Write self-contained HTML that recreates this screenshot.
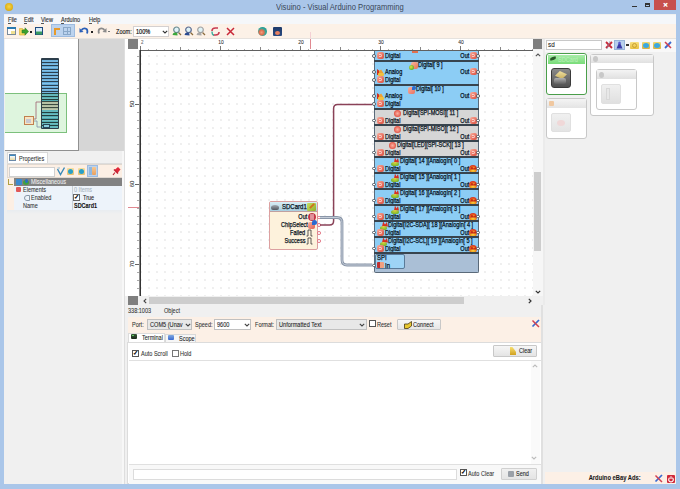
<!DOCTYPE html>
<html><head><meta charset="utf-8">
<style>
*{margin:0;padding:0;box-sizing:border-box}
html,body{width:680px;height:489px;overflow:hidden;background:#aac5e8;font-family:"Liberation Sans",sans-serif;color:#222;position:relative}
.a{position:absolute}
.t{position:absolute;white-space:nowrap;-webkit-text-stroke:0.08px currentColor}
.b .t,.t.k{-webkit-text-stroke:0.25px currentColor}
</style></head><body>
<div class="a" style="left:0px;top:0px;width:680px;height:489px;background:#aac6e9;"></div>
<div class="a" style="left:5px;top:3px;width:8px;height:8px;background:radial-gradient(circle at 50% 45%,#f6d64a 0,#e0b21a 60%,#c89a10 100%);border-radius:50%"></div>
<div class="t" style="left:276px;top:2.21px;font-size:9.5px;line-height:10.86px;color:#3a4658;font-weight:400;transform:scaleX(0.8);transform-origin:0 0;-webkit-text-stroke:0">Visuino - Visual Arduino Programming</div>
<div class="a" style="left:632px;top:6px;width:5px;height:1px;background:#333;"></div>
<div class="a" style="left:645px;top:3px;width:5px;height:4px;background:none;border:1px solid #333;border-top-width:2px"></div>
<div class="a" style="left:654px;top:0px;width:22px;height:10px;background:#c7504d;"></div>
<div class="t" style="left:465px;width:400px;text-align:center;top:1.66px;font-size:6px;line-height:6.86px;color:#fff;font-weight:700;transform:scaleX(1);transform-origin:50% 0;">&#x2715;</div>
<div class="a" style="left:4px;top:14px;width:672px;height:470px;background:#f0f0f0;"></div>
<div class="a" style="left:4px;top:15px;width:672px;height:9px;background:#f5f7fa;"></div>
<div class="t" style="left:8px;top:16.10px;font-size:7px;line-height:8.00px;color:#333;font-weight:400;transform:scaleX(0.79);transform-origin:0 0;-webkit-text-stroke:0.15px currentColor">File</div>
<div class="a" style="left:8px;top:23px;width:3px;height:0.6px;background:#555;"></div>
<div class="t" style="left:24px;top:16.10px;font-size:7px;line-height:8.00px;color:#333;font-weight:400;transform:scaleX(0.79);transform-origin:0 0;-webkit-text-stroke:0.15px currentColor">Edit</div>
<div class="a" style="left:24px;top:23px;width:3px;height:0.6px;background:#555;"></div>
<div class="t" style="left:41px;top:16.10px;font-size:7px;line-height:8.00px;color:#333;font-weight:400;transform:scaleX(0.79);transform-origin:0 0;-webkit-text-stroke:0.15px currentColor">View</div>
<div class="a" style="left:41px;top:23px;width:3px;height:0.6px;background:#555;"></div>
<div class="t" style="left:61px;top:16.10px;font-size:7px;line-height:8.00px;color:#333;font-weight:400;transform:scaleX(0.79);transform-origin:0 0;-webkit-text-stroke:0.15px currentColor">Arduino</div>
<div class="a" style="left:61px;top:23px;width:3px;height:0.6px;background:#555;"></div>
<div class="t" style="left:89px;top:16.10px;font-size:7px;line-height:8.00px;color:#333;font-weight:400;transform:scaleX(0.79);transform-origin:0 0;-webkit-text-stroke:0.15px currentColor">Help</div>
<div class="a" style="left:89px;top:23px;width:3px;height:0.6px;background:#555;"></div>
<div class="a" style="left:4px;top:24px;width:672px;height:14px;background:#fcf1e7;"></div>
<div class="a" style="left:4px;top:38px;width:672px;height:1px;background:#e6e2de;"></div>
<svg class="a" style="left:7px;top:27px" width="9" height="8"><rect x="0.5" y="0.5" width="8" height="7" fill="#fff" stroke="#7a8a9a" stroke-width="1"/><rect x="0" y="0" width="9" height="2" fill="#2a7ab0"/><rect x="4" y="4" width="4" height="3" fill="#f0e090"/></svg>
<svg class="a" style="left:19px;top:27px" width="10" height="9"><path d="M0.5 1.5 H3.5 L4.5 2.5 H6 V8 H0.5 Z" fill="#f2d860" stroke="#d8b030" stroke-width="0.6"/><path d="M3 3 H6 V0.8 L9.6 4.5 L6 8.2 V6 H3 Z" fill="#3aa030" stroke="#2a7a20" stroke-width="0.5"/></svg>
<div class="a" style="left:30px;top:31px;width:2px;height:2px;background:#222;"></div>
<svg class="a" style="left:35px;top:27px" width="8" height="8"><rect x="0.5" y="0.5" width="7" height="7" fill="#d8ecf8" stroke="#1e4a80" stroke-width="1"/><rect x="1" y="4.5" width="6" height="3" fill="#3a9a60"/></svg>
<div class="a" style="left:51px;top:24px;width:24px;height:13px;background:#bcd3ee;border:1px solid #9dbbe0"></div>
<div class="a" style="left:54px;top:28px;width:6px;height:2px;background:#e89a2a;"></div>
<div class="a" style="left:54px;top:28px;width:2px;height:7px;background:#e89a2a;"></div>
<div class="a" style="left:63px;top:27px;width:8px;height:8px;background:none;border:1px solid #8aa8c8;background-image:linear-gradient(#8aa8c8,#8aa8c8),linear-gradient(#8aa8c8,#8aa8c8);background-size:1px 100%,100% 1px;background-position:50% 0,0 50%;background-repeat:no-repeat"></div>
<svg class="a" style="left:79px;top:26px" width="10" height="10"><path d="M2.5 4 Q5 1.5 7.5 3 Q9 4.5 8 7.5" fill="none" stroke="#2a5fb8" stroke-width="1.8"/><path d="M0.5 2 L4.5 6 L0.5 6.5 Z" fill="#2a5fb8"/></svg>
<div class="a" style="left:91px;top:31px;width:2px;height:2px;background:#222;"></div>
<svg class="a" style="left:97px;top:26px" width="10" height="10"><path d="M7.5 4 Q5 1.5 2.5 3 Q1 4.5 2 7.5" fill="none" stroke="#8a8a8a" stroke-width="1.8"/><path d="M9.5 2 L5.5 6 L9.5 6.5 Z" fill="#8a8a8a"/></svg>
<div class="a" style="left:108px;top:31px;width:2px;height:1px;background:#777;"></div>
<div class="t" style="left:115.5px;top:27.60px;font-size:7px;line-height:8.00px;color:#222;font-weight:400;transform:scaleX(0.79);transform-origin:0 0;-webkit-text-stroke:0.15px currentColor">Zoom:</div>
<div class="a" style="left:133px;top:26px;width:36px;height:11px;background:#fff;border:1px solid #d4d0d0"></div>
<div class="t" style="left:135.5px;top:27.60px;font-size:7px;line-height:8.00px;color:#111;font-weight:400;transform:scaleX(0.79);transform-origin:0 0;-webkit-text-stroke:0.2px currentColor">100%</div>
<svg class="a" style="left:162px;top:29.5px" width="6" height="4"><path d="M0.8 0.8 L3 3 L5.2 0.8" fill="none" stroke="#333" stroke-width="1.1"/></svg>
<svg class="a" style="left:172px;top:26px" width="10" height="10"><path d="M6.5 6.5 L9 9" stroke="#8a6a3a" stroke-width="1.3"/><circle cx="4.5" cy="3.8" r="2.8" fill="#dff2f6" stroke="#6a8a90" stroke-width="1.2"/><path d="M0.5 9 Q1 6.2 4 6.6 Q6 7 5.5 9.5 Z" fill="#3aa83a"/></svg>
<svg class="a" style="left:184px;top:26px" width="10" height="10"><path d="M6.5 6.5 L9 9" stroke="#8a6a3a" stroke-width="1.3"/><circle cx="4.5" cy="3.8" r="2.8" fill="#dff2f6" stroke="#5a6a90" stroke-width="1.2"/><path d="M0.5 9 Q1 6.2 4 6.6 Q6 7 5.5 9.5 Z" fill="#2a4a90"/></svg>
<svg class="a" style="left:196px;top:26px" width="10" height="10"><path d="M6.5 6.5 L9 9" stroke="#8a6a3a" stroke-width="1.3"/><circle cx="4.5" cy="3.8" r="2.8" fill="#dff2f6" stroke="#a0a0a0" stroke-width="1.2"/><path d="M0.5 9 Q1 6.2 4 6.6 Q6 7 5.5 9.5 Z" fill="#a8a8a8"/></svg>
<svg class="a" style="left:211px;top:27px" width="9" height="9"><path d="M1 4 Q1 1 4.5 1 H7" fill="none" stroke="#c83a50" stroke-width="1.6"/><path d="M8 5 Q8 8 4.5 8 H2" fill="none" stroke="#c83a50" stroke-width="1.6"/><path d="M1 4.5 Q1 8 3 8" fill="none" stroke="#40b0a0" stroke-width="1.4"/></svg>
<svg class="a" style="left:226px;top:27px" width="9" height="9"><path d="M1 1 L8 8 M8 1 L1 8" stroke="#c82838" stroke-width="1.5"/></svg>
<div class="a" style="left:258px;top:27px;width:9px;height:9px;background:radial-gradient(circle at 40% 60%,#f0a080 0,#e07050 30%,#2aa89a 55%,#1a7a80 100%);border-radius:50%"></div>
<div class="a" style="left:273px;top:27px;width:9px;height:9px;background:linear-gradient(#1e3a6a,#2a4a80);border-radius:1px"></div>
<div class="a" style="left:275px;top:31px;width:5px;height:4px;background:#e88060;border-radius:50%"></div>
<div class="a" style="left:4px;top:39px;width:121px;height:445px;background:#f0f0f0;"></div>
<div class="a" style="left:5px;top:39px;width:74px;height:112px;background:#fff;border-right:1px solid #909090;border-bottom:1px solid #909090"></div>
<div class="a" style="left:79px;top:39px;width:45px;height:112px;background:#d6d6d6;"></div>
<div class="a" style="left:5px;top:93px;width:62px;height:40px;background:#def5de;border:1px solid #7cc07c;border-left:none"></div>
<div class="a" style="left:41px;top:58px;width:18px;height:71px;background:#2e3e4a;border-radius:1px"></div>
<div class="a" style="left:42px;top:59px;width:16px;height:34px;background:repeating-linear-gradient(#2a3e4e 0,#2a3e4e 1px,#5aa4d4 1px,#8ac4e8 2px,#5aa4d4 3.2px);"></div>
<div class="a" style="left:42px;top:93px;width:16px;height:35px;background:repeating-linear-gradient(#24403e 0,#24403e 1px,#4aa8b0 1px,#7ac4c4 2px,#4aa8b0 3.2px);"></div>
<div class="a" style="left:42px;top:101px;width:16px;height:9px;background:repeating-linear-gradient(#3a4a40 0,#3a4a40 1px,#a8b898 1px,#c0c8b0 2px,#a8b898 3.2px);"></div>
<div class="a" style="left:43px;top:124px;width:7px;height:4px;background:#8ad0e0;border:0.5px solid #2a4a5a"></div>
<div class="a" style="left:24px;top:116px;width:10px;height:9px;background:#f8e4c0;border:1px solid #c08050"></div>
<div class="a" style="left:26px;top:119px;width:5px;height:4px;background:#c8c8d0;"></div>
<svg class="a" style="left:0;top:0" width="70" height="140"><path d="M34 119 H36 V102 H41" fill="none" stroke="#a06070" stroke-width="0.8"/><path d="M34 121 H37 V127 H41" fill="none" stroke="#8090a8" stroke-width="0.8"/></svg>
<div class="a" style="left:4px;top:151px;width:121px;height:13px;background:#f0f0f0;"></div>
<div class="a" style="left:7px;top:152px;width:41px;height:12px;background:#fff;border:1px solid #d8d8d8;border-bottom:none"></div>
<div class="a" style="left:8.5px;top:154px;width:7px;height:7px;background:linear-gradient(#3a8ac0 0,#3a8ac0 25%,#f4f8fc 25%,#e8d8a0 100%);border:0.8px solid #6a88a8"></div>
<div class="t" style="left:18.5px;top:154.60px;font-size:7px;line-height:8.00px;color:#333;font-weight:400;transform:scaleX(0.79);transform-origin:0 0;">Properties</div>
<div class="a" style="left:7px;top:163px;width:117px;height:1px;background:#dcdcdc;"></div>
<div class="a" style="left:7px;top:164px;width:117px;height:14px;background:#fcefe4;border:1px solid #e0d8d0"></div>
<div class="a" style="left:9px;top:167px;width:46px;height:10px;background:#fff;border:1px solid #d0d0d0"></div>
<svg class="a" style="left:57px;top:167px" width="8" height="9"><path d="M0.5 2 L3.5 7.5 L7.5 0.5" fill="none" stroke="#3a8ab8" stroke-width="1.4"/><path d="M0.5 1 H3" stroke="#7ab0d0" stroke-width="0.8"/></svg>
<div class="a" style="left:67px;top:168px;width:7px;height:7px;background:linear-gradient(#f8e0a0,#e8c070);border-radius:1px"></div>
<div class="a" style="left:68px;top:169px;width:5px;height:5px;background:#2aa0c8;border-radius:50%"></div>
<div class="a" style="left:78px;top:168px;width:7px;height:7px;background:linear-gradient(#f8e0a0,#e8c070);border-radius:1px"></div>
<div class="a" style="left:79px;top:169px;width:5px;height:5px;background:#2aa0c8;border-radius:50%"></div>
<div class="a" style="left:87px;top:165px;width:11px;height:12px;background:#bcd3ee;border:1px solid #9dbbe0"></div>
<div class="a" style="left:89px;top:167px;width:3px;height:8px;background:#90b8e0;"></div>
<div class="a" style="left:92px;top:167px;width:4px;height:8px;background:linear-gradient(#f8c890,#e8a060);border-radius:1px"></div>
<svg class="a" style="left:112px;top:166px" width="9" height="10"><path d="M3 6.5 L1 9" stroke="#c02030" stroke-width="1.2"/><path d="M2.5 4 L6 1 L8.5 3.5 L5.5 7 Z" fill="#e02838"/><path d="M2 3.5 L6 7.5" stroke="#c02030" stroke-width="1.5"/></svg>
<div class="a" style="left:7px;top:178px;width:117px;height:306px;background:#f0f0f0;"></div>
<div class="a" style="left:7px;top:178px;width:7px;height:32px;background:#fcefe4;"></div>
<div class="a" style="left:14px;top:178px;width:109px;height:8px;background:#828282;"></div>
<div class="a" style="left:8px;top:179px;width:5px;height:6px;background:none;border-left:1px solid #b0a040;border-bottom:1px solid #b0a040"></div>
<div class="a" style="left:16px;top:179px;width:6px;height:6px;background:#3a8ad0;border-radius:1px"></div>
<div class="a" style="left:23px;top:180px;width:6px;height:5px;background:#40a040;border-radius:50%"></div>
<div class="a" style="left:25px;top:179px;width:3px;height:4px;background:#2a70c0;border-radius:50%"></div>
<div class="t" style="left:31px;top:178.10px;font-size:7px;line-height:8.00px;color:#f0f0f0;font-weight:400;transform:scaleX(0.79);transform-origin:0 0;">Miscellaneous</div>
<div class="a" style="left:14px;top:186px;width:109px;height:24px;background:#edf3fa;"></div>
<div class="a" style="left:72px;top:186px;width:1px;height:24px;background:#c8d0d8;"></div>
<div class="a" style="left:16px;top:187px;width:5px;height:5px;background:#e05858;border-radius:1px"></div>
<div class="t" style="left:23px;top:186.10px;font-size:7px;line-height:8.00px;color:#333;font-weight:400;transform:scaleX(0.79);transform-origin:0 0;">Elements</div>
<div class="t" style="left:74px;top:186.10px;font-size:7px;line-height:8.00px;color:#a8b4c0;font-weight:400;transform:scaleX(0.79);transform-origin:0 0;">0 Items</div>
<div class="a" style="left:24px;top:195px;width:6px;height:6px;background:none;border:1px solid #8898a8;border-radius:50% 0 0 50%"></div>
<div class="t" style="left:31px;top:194.10px;font-size:7px;line-height:8.00px;color:#333;font-weight:400;transform:scaleX(0.79);transform-origin:0 0;">Enabled</div>
<div class="a" style="left:73px;top:194px;width:7px;height:7px;background:#fff;border:1px solid #666"></div>
<div class="t" style="left:-123.5px;width:400px;text-align:center;top:194.16px;font-size:6px;line-height:6.86px;color:#222;font-weight:700;transform:scaleX(1);transform-origin:50% 0;">&#x2713;</div>
<div class="t" style="left:83px;top:194.10px;font-size:7px;line-height:8.00px;color:#222;font-weight:400;transform:scaleX(0.79);transform-origin:0 0;">True</div>
<div class="t" style="left:23px;top:202.10px;font-size:7px;line-height:8.00px;color:#333;font-weight:400;transform:scaleX(0.79);transform-origin:0 0;">Name</div>
<div class="t" style="left:74px;top:202.10px;font-size:7px;line-height:8.00px;color:#111;font-weight:700;transform:scaleX(0.78);transform-origin:0 0;">SDCard1</div>
<div class="a" style="left:7px;top:210px;width:116px;height:4px;background:linear-gradient(#e8ecf0,#f0f0f0);"></div>
<div class="a" style="left:122px;top:151px;width:2px;height:333px;background:#f7f7f7;"></div>
<div class="a" style="left:124px;top:39px;width:1px;height:445px;background:#dedede;"></div>
<div class="a" style="left:125px;top:39px;width:2px;height:266px;background:#f8f8f8;"></div>
<div class="a" style="left:125px;top:39px;width:420px;height:266px;background:#f0f0f0;"></div>
<div class="a" style="left:125px;top:39px;width:408px;height:257px;background:#fff;"></div>
<div class="a" style="left:141px;top:51px;width:392px;height:245px;background:#fff;background-image:radial-gradient(circle at 1px 1px,#eaeaea 0,#f0f0f0 0.8px,rgba(255,255,255,0) 1.5px);background-size:8px 8px;background-position:7px 4px"></div>
<div class="a" style="left:128px;top:39px;width:10px;height:10px;background:#7f7f7f;"></div>
<div class="a" style="left:533px;top:39px;width:9px;height:10px;background:#7f7f7f;"></div>
<div class="a" style="left:128px;top:296px;width:10px;height:9px;background:#7f7f7f;"></div>
<div class="a" style="left:141px;top:48.5px;width:392px;height:1.5px;background:repeating-linear-gradient(90deg,transparent 0,transparent 7px,#aaa 7px,#aaa 8px);"></div>
<div class="a" style="left:140px;top:46px;width:1px;height:4px;background:#777;"></div>
<div class="a" style="left:220px;top:46px;width:1px;height:4px;background:#777;"></div>
<div class="a" style="left:300px;top:46px;width:1px;height:4px;background:#777;"></div>
<div class="a" style="left:380px;top:46px;width:1px;height:4px;background:#777;"></div>
<div class="a" style="left:460px;top:46px;width:1px;height:4px;background:#777;"></div>
<div class="a" style="left:180px;top:47px;width:1px;height:3px;background:#888;"></div>
<div class="a" style="left:260px;top:47px;width:1px;height:3px;background:#888;"></div>
<div class="a" style="left:340px;top:47px;width:1px;height:3px;background:#888;"></div>
<div class="a" style="left:420px;top:47px;width:1px;height:3px;background:#888;"></div>
<div class="a" style="left:500px;top:47px;width:1px;height:3px;background:#888;"></div>
<div class="t" style="left:21px;width:400px;text-align:center;top:38.94px;font-size:5.5px;line-height:6.29px;color:#333;font-weight:400;transform:scaleX(0.9);transform-origin:50% 0;">10</div>
<div class="t" style="left:101px;width:400px;text-align:center;top:38.94px;font-size:5.5px;line-height:6.29px;color:#333;font-weight:400;transform:scaleX(0.9);transform-origin:50% 0;">20</div>
<div class="t" style="left:181px;width:400px;text-align:center;top:38.94px;font-size:5.5px;line-height:6.29px;color:#333;font-weight:400;transform:scaleX(0.9);transform-origin:50% 0;">30</div>
<div class="t" style="left:261px;width:400px;text-align:center;top:38.94px;font-size:5.5px;line-height:6.29px;color:#333;font-weight:400;transform:scaleX(0.9);transform-origin:50% 0;">40</div>
<div class="t" style="left:141px;top:39.72px;font-size:5px;line-height:5.71px;color:#666;font-weight:400;transform:scaleX(0.9);transform-origin:0 0;">2</div>
<div class="a" style="left:310px;top:32px;width:1px;height:6px;background:#f4d0d4;"></div>
<div class="a" style="left:310px;top:39px;width:1px;height:10px;background:#e08890;"></div>
<div class="a" style="left:140px;top:50px;width:393px;height:1px;background:#606060;"></div>
<div class="a" style="left:137px;top:51px;width:2px;height:245px;background:repeating-linear-gradient(180deg,transparent 0,transparent 5px,#aaa 5px,#aaa 6px,transparent 6px,transparent 8px);"></div>
<div class="a" style="left:135px;top:104px;width:4px;height:1px;background:#666;"></div>
<div class="t" style="left:126.5px;top:100px;width:10px;height:8px;font-size:6px;line-height:8px;text-align:center;color:#333;transform:rotate(-90deg)">50</div>
<div class="a" style="left:135px;top:184px;width:4px;height:1px;background:#666;"></div>
<div class="t" style="left:126.5px;top:180px;width:10px;height:8px;font-size:6px;line-height:8px;text-align:center;color:#333;transform:rotate(-90deg)">60</div>
<div class="a" style="left:135px;top:264px;width:4px;height:1px;background:#666;"></div>
<div class="t" style="left:126.5px;top:260px;width:10px;height:8px;font-size:6px;line-height:8px;text-align:center;color:#333;transform:rotate(-90deg)">70</div>
<div class="a" style="left:128px;top:207px;width:11px;height:1px;background:#e08890;"></div>
<div class="a" style="left:139px;top:50px;width:1px;height:246px;background:#8a8a8a;"></div>
<div class="a" style="left:140px;top:50px;width:1px;height:246px;background:#333;"></div>
<div class="a" style="left:533px;top:50px;width:10px;height:246px;background:#f6f6f6;"></div>
<div class="a" style="left:534px;top:172px;width:7px;height:79px;background:#cdcdcd;"></div>
<svg class="a" style="left:535px;top:53px" width="6" height="4"><path d="M0.8 3.2 L3 1 L5.2 3.2" fill="none" stroke="#555" stroke-width="1.1"/></svg>
<svg class="a" style="left:535px;top:290px" width="6" height="4"><path d="M0.8 0.8 L3 3 L5.2 0.8" fill="none" stroke="#333" stroke-width="1.2"/></svg>
<div class="a" style="left:140px;top:296px;width:393px;height:9px;background:#f0f0f0;"></div>
<div class="a" style="left:149px;top:297px;width:315px;height:7px;background:#cdcdcd;"></div>
<svg class="a" style="left:143px;top:298px" width="4" height="6"><path d="M3.2 0.8 L1 3 L3.2 5.2" fill="none" stroke="#444" stroke-width="1.1"/></svg>
<svg class="a" style="left:528px;top:298px" width="4" height="6"><path d="M0.8 0.8 L3 3 L0.8 5.2" fill="none" stroke="#333" stroke-width="1.2"/></svg>
<div class="a" style="left:543px;top:39px;width:2px;height:266px;background:#ebebeb;"></div>
<div class="a" style="left:374px;top:51px;width:105px;height:222px;background:#aabfd6;border:1px solid #5a6a7a;border-top:none;border-radius:0 0 2px 2px"></div>
<div class="a" style="left:374px;top:51px;width:105px;height:9px;background:#8ccdf5;border-left:1px solid #5a6a7a;border-right:1px solid #5a6a7a"></div>
<div class="a" style="left:412px;top:51px;width:6px;height:2px;background:#e07050;"></div>
<div class="a" style="left:377px;top:52px;width:7px;height:7px;background:linear-gradient(135deg,#f8b0a0 0,#e87060 60%,#d85040 100%);border-radius:2px"></div>
<div class="a" style="left:379px;top:54px;width:3px;height:3px;background:none;border:1px solid rgba(255,255,255,.6);border-left:none;border-radius:0 2px 2px 0"></div>
<div class="t k" style="left:385px;top:52.10px;font-size:7px;line-height:8.00px;color:#05101a;font-weight:400;transform:scaleX(0.79);transform-origin:0 0;">Digital</div>
<div class="t k" style="right:211px;top:52.10px;font-size:7px;line-height:8.00px;color:#05101a;font-weight:400;transform:scaleX(0.79);transform-origin:100% 0;">Out</div>
<div class="a" style="left:470px;top:52px;width:7px;height:7px;background:linear-gradient(135deg,#f8b0a0 0,#e87060 60%,#d85040 100%);border-radius:2px"></div>
<div class="a" style="left:472px;top:54px;width:3px;height:3px;background:none;border:1px solid rgba(255,255,255,.6);border-left:none;border-radius:0 2px 2px 0"></div>
<div class="a" style="left:372.1px;top:54.1px;width:3.8px;height:3.8px;background:#fff;border:0.9px solid #505a64;border-radius:50%"></div>
<div class="a" style="left:476.1px;top:54.1px;width:3.8px;height:3.8px;background:#fff;border:0.9px solid #505a64;border-radius:50%"></div>
<div class="a" style="left:374px;top:61.5px;width:105px;height:22.5px;background:#8ccdf5;border-left:1px solid #5a6a7a;border-right:1px solid #5a6a7a"></div>
<div class="a" style="left:411px;top:61.5px;width:7px;height:7px;background:linear-gradient(135deg,#f8b8a0,#e87050);border-radius:2px"></div>
<div class="a" style="left:409px;top:64.5px;width:5px;height:5px;background:radial-gradient(circle at 40% 40%,#e0e040,#60b030 70%);border-radius:50%"></div>
<div class="t k" style="left:418px;top:61.10px;font-size:7px;line-height:8.00px;color:#05101a;font-weight:400;transform:scaleX(0.79);transform-origin:0 0;">Digital[ 9 ]</div>
<div class="a" style="left:377px;top:69px;width:6px;height:6px;background:linear-gradient(90deg,#d03020 0,#d03020 30%,#f0a030 30%);clip-path:polygon(0 100%,0 0,40% 30%,70% 10%,100% 60%,100% 100%)"></div>
<div class="a" style="left:378px;top:73px;width:6px;height:3px;background:#f0c040;border-radius:1px"></div>
<div class="t k" style="left:385px;top:68.10px;font-size:7px;line-height:8.00px;color:#05101a;font-weight:400;transform:scaleX(0.79);transform-origin:0 0;">Analog</div>
<div class="a" style="left:372.1px;top:70.1px;width:3.8px;height:3.8px;background:#fff;border:0.9px solid #505a64;border-radius:50%"></div>
<div class="a" style="left:377px;top:76px;width:7px;height:7px;background:linear-gradient(135deg,#f8b0a0 0,#e87060 60%,#d85040 100%);border-radius:2px"></div>
<div class="a" style="left:379px;top:78px;width:3px;height:3px;background:none;border:1px solid rgba(255,255,255,.6);border-left:none;border-radius:0 2px 2px 0"></div>
<div class="t k" style="left:385px;top:76.10px;font-size:7px;line-height:8.00px;color:#05101a;font-weight:400;transform:scaleX(0.79);transform-origin:0 0;">Digital</div>
<div class="a" style="left:372.1px;top:78.1px;width:3.8px;height:3.8px;background:#fff;border:0.9px solid #505a64;border-radius:50%"></div>
<div class="t k" style="right:211px;top:68.10px;font-size:7px;line-height:8.00px;color:#05101a;font-weight:400;transform:scaleX(0.79);transform-origin:100% 0;">Out</div>
<div class="a" style="left:470px;top:68px;width:7px;height:7px;background:linear-gradient(135deg,#f8b0a0 0,#e87060 60%,#d85040 100%);border-radius:2px"></div>
<div class="a" style="left:472px;top:70px;width:3px;height:3px;background:none;border:1px solid rgba(255,255,255,.6);border-left:none;border-radius:0 2px 2px 0"></div>
<div class="a" style="left:476.1px;top:70.1px;width:3.8px;height:3.8px;background:#fff;border:0.9px solid #505a64;border-radius:50%"></div>
<div class="a" style="left:374px;top:85.5px;width:105px;height:22.5px;background:#8ccdf5;border-left:1px solid #5a6a7a;border-right:1px solid #5a6a7a"></div>
<div class="a" style="left:408px;top:86.5px;width:7px;height:7px;background:linear-gradient(135deg,#f8b0a0 0,#e87060 100%);border-radius:2px"></div>
<div class="a" style="left:412px;top:85.5px;width:4px;height:4px;background:#2a6ad0;border-radius:50% 50% 50% 0"></div>
<div class="t k" style="left:416px;top:85.10px;font-size:7px;line-height:8.00px;color:#05101a;font-weight:400;transform:scaleX(0.79);transform-origin:0 0;">Digital[ 10 ]</div>
<div class="a" style="left:377px;top:93px;width:6px;height:6px;background:linear-gradient(90deg,#d03020 0,#d03020 30%,#f0a030 30%);clip-path:polygon(0 100%,0 0,40% 30%,70% 10%,100% 60%,100% 100%)"></div>
<div class="a" style="left:378px;top:97px;width:6px;height:3px;background:#f0c040;border-radius:1px"></div>
<div class="t k" style="left:385px;top:92.10px;font-size:7px;line-height:8.00px;color:#05101a;font-weight:400;transform:scaleX(0.79);transform-origin:0 0;">Analog</div>
<div class="a" style="left:372.1px;top:94.1px;width:3.8px;height:3.8px;background:#fff;border:0.9px solid #505a64;border-radius:50%"></div>
<div class="a" style="left:377px;top:100px;width:7px;height:7px;background:linear-gradient(135deg,#f8b0a0 0,#e87060 60%,#d85040 100%);border-radius:2px"></div>
<div class="a" style="left:379px;top:102px;width:3px;height:3px;background:none;border:1px solid rgba(255,255,255,.6);border-left:none;border-radius:0 2px 2px 0"></div>
<div class="t k" style="left:385px;top:100.10px;font-size:7px;line-height:8.00px;color:#05101a;font-weight:400;transform:scaleX(0.79);transform-origin:0 0;">Digital</div>
<div class="a" style="left:372.1px;top:102.1px;width:3.8px;height:3.8px;background:#fff;border:0.9px solid #505a64;border-radius:50%"></div>
<div class="t k" style="right:211px;top:92.10px;font-size:7px;line-height:8.00px;color:#05101a;font-weight:400;transform:scaleX(0.79);transform-origin:100% 0;">Out</div>
<div class="a" style="left:470px;top:92px;width:7px;height:7px;background:linear-gradient(135deg,#f8b0a0 0,#e87060 60%,#d85040 100%);border-radius:2px"></div>
<div class="a" style="left:472px;top:94px;width:3px;height:3px;background:none;border:1px solid rgba(255,255,255,.6);border-left:none;border-radius:0 2px 2px 0"></div>
<div class="a" style="left:476.1px;top:94.1px;width:3.8px;height:3.8px;background:#fff;border:0.9px solid #505a64;border-radius:50%"></div>
<div class="a" style="left:374px;top:109.5px;width:105px;height:14.5px;background:#d6d6d6;border-left:1px solid #5a6a7a;border-right:1px solid #5a6a7a"></div>
<div class="a" style="left:394px;top:109.5px;width:7px;height:7px;background:radial-gradient(circle,#f8b0a0 0,#f08070 40%,#e05040 70%);border-radius:50%"></div>
<div class="t k" style="left:402.5px;top:109.40px;font-size:7px;line-height:8.00px;color:#05101a;font-weight:400;transform:scaleX(0.79);transform-origin:0 0;">Digital[SPI-MOSI][ 11 ]</div>
<div class="a" style="left:377px;top:117px;width:7px;height:7px;background:linear-gradient(135deg,#f8b0a0 0,#e87060 60%,#d85040 100%);border-radius:2px"></div>
<div class="a" style="left:379px;top:119px;width:3px;height:3px;background:none;border:1px solid rgba(255,255,255,.6);border-left:none;border-radius:0 2px 2px 0"></div>
<div class="t k" style="left:385px;top:116.80px;font-size:7px;line-height:8.00px;color:#05101a;font-weight:400;transform:scaleX(0.79);transform-origin:0 0;">Digital</div>
<div class="a" style="left:372.1px;top:118.6px;width:3.8px;height:3.8px;background:#fff;border:0.9px solid #505a64;border-radius:50%"></div>
<div class="t k" style="right:211px;top:116.80px;font-size:7px;line-height:8.00px;color:#05101a;font-weight:400;transform:scaleX(0.79);transform-origin:100% 0;">Out</div>
<div class="a" style="left:470px;top:117px;width:7px;height:7px;background:linear-gradient(135deg,#f8b0a0 0,#e87060 60%,#d85040 100%);border-radius:2px"></div>
<div class="a" style="left:472px;top:119px;width:3px;height:3px;background:none;border:1px solid rgba(255,255,255,.6);border-left:none;border-radius:0 2px 2px 0"></div>
<div class="a" style="left:476.1px;top:118.6px;width:3.8px;height:3.8px;background:#fff;border:0.9px solid #505a64;border-radius:50%"></div>
<div class="a" style="left:374px;top:125.5px;width:105px;height:14.5px;background:#d6d6d6;border-left:1px solid #5a6a7a;border-right:1px solid #5a6a7a"></div>
<div class="a" style="left:394px;top:125.5px;width:7px;height:7px;background:radial-gradient(circle,#f8b0a0 0,#f08070 40%,#e05040 70%);border-radius:50%"></div>
<div class="t k" style="left:402.5px;top:125.40px;font-size:7px;line-height:8.00px;color:#05101a;font-weight:400;transform:scaleX(0.79);transform-origin:0 0;">Digital[SPI-MISO][ 12 ]</div>
<div class="a" style="left:377px;top:133px;width:7px;height:7px;background:linear-gradient(135deg,#f8b0a0 0,#e87060 60%,#d85040 100%);border-radius:2px"></div>
<div class="a" style="left:379px;top:135px;width:3px;height:3px;background:none;border:1px solid rgba(255,255,255,.6);border-left:none;border-radius:0 2px 2px 0"></div>
<div class="t k" style="left:385px;top:132.80px;font-size:7px;line-height:8.00px;color:#05101a;font-weight:400;transform:scaleX(0.79);transform-origin:0 0;">Digital</div>
<div class="a" style="left:372.1px;top:134.6px;width:3.8px;height:3.8px;background:#fff;border:0.9px solid #505a64;border-radius:50%"></div>
<div class="t k" style="right:211px;top:132.80px;font-size:7px;line-height:8.00px;color:#05101a;font-weight:400;transform:scaleX(0.79);transform-origin:100% 0;">Out</div>
<div class="a" style="left:470px;top:133px;width:7px;height:7px;background:linear-gradient(135deg,#f8b0a0 0,#e87060 60%,#d85040 100%);border-radius:2px"></div>
<div class="a" style="left:472px;top:135px;width:3px;height:3px;background:none;border:1px solid rgba(255,255,255,.6);border-left:none;border-radius:0 2px 2px 0"></div>
<div class="a" style="left:476.1px;top:134.6px;width:3.8px;height:3.8px;background:#fff;border:0.9px solid #505a64;border-radius:50%"></div>
<div class="a" style="left:374px;top:141.5px;width:105px;height:14.5px;background:#d6d6d6;border-left:1px solid #5a6a7a;border-right:1px solid #5a6a7a"></div>
<div class="a" style="left:389px;top:141.5px;width:7px;height:7px;background:radial-gradient(circle,#f8b0a0 0,#f08070 40%,#e05040 70%);border-radius:50%"></div>
<div class="t k" style="left:397px;top:141.40px;font-size:7px;line-height:8.00px;color:#05101a;font-weight:400;transform:scaleX(0.79);transform-origin:0 0;">Digital[LED][SPI-SCK][ 13 ]</div>
<div class="a" style="left:377px;top:149px;width:7px;height:7px;background:linear-gradient(135deg,#f8b0a0 0,#e87060 60%,#d85040 100%);border-radius:2px"></div>
<div class="a" style="left:379px;top:151px;width:3px;height:3px;background:none;border:1px solid rgba(255,255,255,.6);border-left:none;border-radius:0 2px 2px 0"></div>
<div class="t k" style="left:385px;top:148.80px;font-size:7px;line-height:8.00px;color:#05101a;font-weight:400;transform:scaleX(0.79);transform-origin:0 0;">Digital</div>
<div class="a" style="left:372.1px;top:150.6px;width:3.8px;height:3.8px;background:#fff;border:0.9px solid #505a64;border-radius:50%"></div>
<div class="t k" style="right:211px;top:148.80px;font-size:7px;line-height:8.00px;color:#05101a;font-weight:400;transform:scaleX(0.79);transform-origin:100% 0;">Out</div>
<div class="a" style="left:470px;top:149px;width:7px;height:7px;background:linear-gradient(135deg,#f8b0a0 0,#e87060 60%,#d85040 100%);border-radius:2px"></div>
<div class="a" style="left:472px;top:151px;width:3px;height:3px;background:none;border:1px solid rgba(255,255,255,.6);border-left:none;border-radius:0 2px 2px 0"></div>
<div class="a" style="left:476.1px;top:150.6px;width:3.8px;height:3.8px;background:#fff;border:0.9px solid #505a64;border-radius:50%"></div>
<div class="a" style="left:374px;top:157.5px;width:105px;height:14.5px;background:#8ccdf5;border-left:1px solid #5a6a7a;border-right:1px solid #5a6a7a"></div>
<div class="a" style="left:394px;top:157.5px;width:5px;height:5px;background:#d83020;clip-path:polygon(0 100%,20% 0,50% 60%,80% 10%,100% 100%)"></div>
<div class="a" style="left:391px;top:161.5px;width:8px;height:4px;background:radial-gradient(circle at 50% 0,#f0d040 0,#90c030 60%,#50a020 100%);border-radius:50% 50% 2px 2px"></div>
<div class="t k" style="left:400px;top:157.40px;font-size:7px;line-height:8.00px;color:#05101a;font-weight:400;transform:scaleX(0.79);transform-origin:0 0;">Digital[ 14 ][AnalogIn[ 0 ]</div>
<div class="a" style="left:377px;top:165px;width:7px;height:7px;background:linear-gradient(135deg,#f8b0a0 0,#e87060 60%,#d85040 100%);border-radius:2px"></div>
<div class="a" style="left:379px;top:167px;width:3px;height:3px;background:none;border:1px solid rgba(255,255,255,.6);border-left:none;border-radius:0 2px 2px 0"></div>
<div class="t k" style="left:385px;top:164.80px;font-size:7px;line-height:8.00px;color:#05101a;font-weight:400;transform:scaleX(0.79);transform-origin:0 0;">Digital</div>
<div class="a" style="left:372.1px;top:166.6px;width:3.8px;height:3.8px;background:#fff;border:0.9px solid #505a64;border-radius:50%"></div>
<div class="t k" style="right:211px;top:164.80px;font-size:7px;line-height:8.00px;color:#05101a;font-weight:400;transform:scaleX(0.79);transform-origin:100% 0;">Out</div>
<div class="a" style="left:469px;top:164.5px;width:8px;height:8px;background:radial-gradient(circle at 50% 65%,#f8d040 0,#f0a020 35%,#e04020 65%,#c83020 100%);border-radius:50%"></div>
<div class="a" style="left:470px;top:166.5px;width:6px;height:3px;background:#c82818;clip-path:polygon(0 100%,30% 0,60% 70%,100% 20%,100% 100%)"></div>
<div class="a" style="left:476.1px;top:166.6px;width:3.8px;height:3.8px;background:#fff;border:0.9px solid #505a64;border-radius:50%"></div>
<div class="a" style="left:374px;top:173.5px;width:105px;height:14.5px;background:#8ccdf5;border-left:1px solid #5a6a7a;border-right:1px solid #5a6a7a"></div>
<div class="a" style="left:394px;top:173.5px;width:5px;height:5px;background:#d83020;clip-path:polygon(0 100%,20% 0,50% 60%,80% 10%,100% 100%)"></div>
<div class="a" style="left:391px;top:177.5px;width:8px;height:4px;background:radial-gradient(circle at 50% 0,#f0d040 0,#90c030 60%,#50a020 100%);border-radius:50% 50% 2px 2px"></div>
<div class="t k" style="left:400px;top:173.40px;font-size:7px;line-height:8.00px;color:#05101a;font-weight:400;transform:scaleX(0.79);transform-origin:0 0;">Digital[ 15 ][AnalogIn[ 1 ]</div>
<div class="a" style="left:377px;top:181px;width:7px;height:7px;background:linear-gradient(135deg,#f8b0a0 0,#e87060 60%,#d85040 100%);border-radius:2px"></div>
<div class="a" style="left:379px;top:183px;width:3px;height:3px;background:none;border:1px solid rgba(255,255,255,.6);border-left:none;border-radius:0 2px 2px 0"></div>
<div class="t k" style="left:385px;top:180.80px;font-size:7px;line-height:8.00px;color:#05101a;font-weight:400;transform:scaleX(0.79);transform-origin:0 0;">Digital</div>
<div class="a" style="left:372.1px;top:182.6px;width:3.8px;height:3.8px;background:#fff;border:0.9px solid #505a64;border-radius:50%"></div>
<div class="t k" style="right:211px;top:180.80px;font-size:7px;line-height:8.00px;color:#05101a;font-weight:400;transform:scaleX(0.79);transform-origin:100% 0;">Out</div>
<div class="a" style="left:469px;top:180.5px;width:8px;height:8px;background:radial-gradient(circle at 50% 65%,#f8d040 0,#f0a020 35%,#e04020 65%,#c83020 100%);border-radius:50%"></div>
<div class="a" style="left:470px;top:182.5px;width:6px;height:3px;background:#c82818;clip-path:polygon(0 100%,30% 0,60% 70%,100% 20%,100% 100%)"></div>
<div class="a" style="left:476.1px;top:182.6px;width:3.8px;height:3.8px;background:#fff;border:0.9px solid #505a64;border-radius:50%"></div>
<div class="a" style="left:374px;top:189.5px;width:105px;height:14.5px;background:#8ccdf5;border-left:1px solid #5a6a7a;border-right:1px solid #5a6a7a"></div>
<div class="a" style="left:394px;top:189.5px;width:5px;height:5px;background:#d83020;clip-path:polygon(0 100%,20% 0,50% 60%,80% 10%,100% 100%)"></div>
<div class="a" style="left:391px;top:193.5px;width:8px;height:4px;background:radial-gradient(circle at 50% 0,#f0d040 0,#90c030 60%,#50a020 100%);border-radius:50% 50% 2px 2px"></div>
<div class="t k" style="left:400px;top:189.40px;font-size:7px;line-height:8.00px;color:#05101a;font-weight:400;transform:scaleX(0.79);transform-origin:0 0;">Digital[ 16 ][AnalogIn[ 2 ]</div>
<div class="a" style="left:377px;top:197px;width:7px;height:7px;background:linear-gradient(135deg,#f8b0a0 0,#e87060 60%,#d85040 100%);border-radius:2px"></div>
<div class="a" style="left:379px;top:199px;width:3px;height:3px;background:none;border:1px solid rgba(255,255,255,.6);border-left:none;border-radius:0 2px 2px 0"></div>
<div class="t k" style="left:385px;top:196.80px;font-size:7px;line-height:8.00px;color:#05101a;font-weight:400;transform:scaleX(0.79);transform-origin:0 0;">Digital</div>
<div class="a" style="left:372.1px;top:198.6px;width:3.8px;height:3.8px;background:#fff;border:0.9px solid #505a64;border-radius:50%"></div>
<div class="t k" style="right:211px;top:196.80px;font-size:7px;line-height:8.00px;color:#05101a;font-weight:400;transform:scaleX(0.79);transform-origin:100% 0;">Out</div>
<div class="a" style="left:469px;top:196.5px;width:8px;height:8px;background:radial-gradient(circle at 50% 65%,#f8d040 0,#f0a020 35%,#e04020 65%,#c83020 100%);border-radius:50%"></div>
<div class="a" style="left:470px;top:198.5px;width:6px;height:3px;background:#c82818;clip-path:polygon(0 100%,30% 0,60% 70%,100% 20%,100% 100%)"></div>
<div class="a" style="left:476.1px;top:198.6px;width:3.8px;height:3.8px;background:#fff;border:0.9px solid #505a64;border-radius:50%"></div>
<div class="a" style="left:374px;top:205.5px;width:105px;height:14.5px;background:#8ccdf5;border-left:1px solid #5a6a7a;border-right:1px solid #5a6a7a"></div>
<div class="a" style="left:394px;top:205.5px;width:5px;height:5px;background:#d83020;clip-path:polygon(0 100%,20% 0,50% 60%,80% 10%,100% 100%)"></div>
<div class="a" style="left:391px;top:209.5px;width:8px;height:4px;background:radial-gradient(circle at 50% 0,#f0d040 0,#90c030 60%,#50a020 100%);border-radius:50% 50% 2px 2px"></div>
<div class="t k" style="left:400px;top:205.40px;font-size:7px;line-height:8.00px;color:#05101a;font-weight:400;transform:scaleX(0.79);transform-origin:0 0;">Digital[ 17 ][AnalogIn[ 3 ]</div>
<div class="a" style="left:377px;top:213px;width:7px;height:7px;background:linear-gradient(135deg,#f8b0a0 0,#e87060 60%,#d85040 100%);border-radius:2px"></div>
<div class="a" style="left:379px;top:215px;width:3px;height:3px;background:none;border:1px solid rgba(255,255,255,.6);border-left:none;border-radius:0 2px 2px 0"></div>
<div class="t k" style="left:385px;top:212.80px;font-size:7px;line-height:8.00px;color:#05101a;font-weight:400;transform:scaleX(0.79);transform-origin:0 0;">Digital</div>
<div class="a" style="left:372.1px;top:214.6px;width:3.8px;height:3.8px;background:#fff;border:0.9px solid #505a64;border-radius:50%"></div>
<div class="t k" style="right:211px;top:212.80px;font-size:7px;line-height:8.00px;color:#05101a;font-weight:400;transform:scaleX(0.79);transform-origin:100% 0;">Out</div>
<div class="a" style="left:469px;top:212.5px;width:8px;height:8px;background:radial-gradient(circle at 50% 65%,#f8d040 0,#f0a020 35%,#e04020 65%,#c83020 100%);border-radius:50%"></div>
<div class="a" style="left:470px;top:214.5px;width:6px;height:3px;background:#c82818;clip-path:polygon(0 100%,30% 0,60% 70%,100% 20%,100% 100%)"></div>
<div class="a" style="left:476.1px;top:214.6px;width:3.8px;height:3.8px;background:#fff;border:0.9px solid #505a64;border-radius:50%"></div>
<div class="a" style="left:374px;top:221.5px;width:105px;height:14.5px;background:#8ccdf5;border-left:1px solid #5a6a7a;border-right:1px solid #5a6a7a"></div>
<div class="a" style="left:382px;top:221.5px;width:6px;height:5px;background:#d83020;clip-path:polygon(0 100%,20% 0,50% 60%,80% 10%,100% 100%)"></div>
<div class="a" style="left:380px;top:225.5px;width:7px;height:4px;background:radial-gradient(circle at 50% 0,#f0d040 0,#90c030 60%,#50a020 100%);border-radius:50% 50% 2px 2px"></div>
<div class="t k" style="left:387.5px;top:221.40px;font-size:7px;line-height:8.00px;color:#05101a;font-weight:400;transform:scaleX(0.79);transform-origin:0 0;">Digital[I2C-SDA][ 18 ][AnalogIn[ 4 ]</div>
<div class="a" style="left:377px;top:229px;width:7px;height:7px;background:linear-gradient(135deg,#f8b0a0 0,#e87060 60%,#d85040 100%);border-radius:2px"></div>
<div class="a" style="left:379px;top:231px;width:3px;height:3px;background:none;border:1px solid rgba(255,255,255,.6);border-left:none;border-radius:0 2px 2px 0"></div>
<div class="t k" style="left:385px;top:228.80px;font-size:7px;line-height:8.00px;color:#05101a;font-weight:400;transform:scaleX(0.79);transform-origin:0 0;">Digital</div>
<div class="a" style="left:372.1px;top:230.6px;width:3.8px;height:3.8px;background:#fff;border:0.9px solid #505a64;border-radius:50%"></div>
<div class="t k" style="right:211px;top:228.80px;font-size:7px;line-height:8.00px;color:#05101a;font-weight:400;transform:scaleX(0.79);transform-origin:100% 0;">Out</div>
<div class="a" style="left:469px;top:228.5px;width:8px;height:8px;background:radial-gradient(circle at 50% 65%,#f8d040 0,#f0a020 35%,#e04020 65%,#c83020 100%);border-radius:50%"></div>
<div class="a" style="left:470px;top:230.5px;width:6px;height:3px;background:#c82818;clip-path:polygon(0 100%,30% 0,60% 70%,100% 20%,100% 100%)"></div>
<div class="a" style="left:476.1px;top:230.6px;width:3.8px;height:3.8px;background:#fff;border:0.9px solid #505a64;border-radius:50%"></div>
<div class="a" style="left:374px;top:237.5px;width:105px;height:14.5px;background:#8ccdf5;border-left:1px solid #5a6a7a;border-right:1px solid #5a6a7a"></div>
<div class="a" style="left:382px;top:237.5px;width:6px;height:5px;background:#d83020;clip-path:polygon(0 100%,20% 0,50% 60%,80% 10%,100% 100%)"></div>
<div class="a" style="left:380px;top:241.5px;width:7px;height:4px;background:radial-gradient(circle at 50% 0,#f0d040 0,#90c030 60%,#50a020 100%);border-radius:50% 50% 2px 2px"></div>
<div class="t k" style="left:387.5px;top:237.40px;font-size:7px;line-height:8.00px;color:#05101a;font-weight:400;transform:scaleX(0.79);transform-origin:0 0;">Digital[I2C-SCL][ 19 ][AnalogIn[ 5 ]</div>
<div class="a" style="left:377px;top:245px;width:7px;height:7px;background:linear-gradient(135deg,#f8b0a0 0,#e87060 60%,#d85040 100%);border-radius:2px"></div>
<div class="a" style="left:379px;top:247px;width:3px;height:3px;background:none;border:1px solid rgba(255,255,255,.6);border-left:none;border-radius:0 2px 2px 0"></div>
<div class="t k" style="left:385px;top:244.80px;font-size:7px;line-height:8.00px;color:#05101a;font-weight:400;transform:scaleX(0.79);transform-origin:0 0;">Digital</div>
<div class="a" style="left:372.1px;top:246.6px;width:3.8px;height:3.8px;background:#fff;border:0.9px solid #505a64;border-radius:50%"></div>
<div class="t k" style="right:211px;top:244.80px;font-size:7px;line-height:8.00px;color:#05101a;font-weight:400;transform:scaleX(0.79);transform-origin:100% 0;">Out</div>
<div class="a" style="left:469px;top:244.5px;width:8px;height:8px;background:radial-gradient(circle at 50% 65%,#f8d040 0,#f0a020 35%,#e04020 65%,#c83020 100%);border-radius:50%"></div>
<div class="a" style="left:470px;top:246.5px;width:6px;height:3px;background:#c82818;clip-path:polygon(0 100%,30% 0,60% 70%,100% 20%,100% 100%)"></div>
<div class="a" style="left:476.1px;top:246.6px;width:3.8px;height:3.8px;background:#fff;border:0.9px solid #505a64;border-radius:50%"></div>
<div class="a" style="left:374px;top:59.5px;width:105px;height:2px;background:#38444e;"></div>
<div class="a" style="left:374px;top:83.5px;width:105px;height:2px;background:#38444e;"></div>
<div class="a" style="left:374px;top:107.5px;width:105px;height:2px;background:#38444e;"></div>
<div class="a" style="left:374px;top:123.5px;width:105px;height:2px;background:#38444e;"></div>
<div class="a" style="left:374px;top:139.5px;width:105px;height:2px;background:#38444e;"></div>
<div class="a" style="left:374px;top:155.5px;width:105px;height:2px;background:#38444e;"></div>
<div class="a" style="left:374px;top:171.5px;width:105px;height:2px;background:#38444e;"></div>
<div class="a" style="left:374px;top:187.5px;width:105px;height:2px;background:#38444e;"></div>
<div class="a" style="left:374px;top:203.5px;width:105px;height:2px;background:#38444e;"></div>
<div class="a" style="left:374px;top:219.5px;width:105px;height:2px;background:#38444e;"></div>
<div class="a" style="left:374px;top:235.5px;width:105px;height:2px;background:#38444e;"></div>
<div class="a" style="left:374px;top:251.5px;width:105px;height:2px;background:#38444e;"></div>
<div class="a" style="left:375px;top:254px;width:30px;height:15px;background:#9ed4f6;border:1px solid #5a7a98;border-radius:2px"></div>
<div class="t k" style="left:377px;top:253.60px;font-size:7px;line-height:8.00px;color:#05101a;font-weight:400;transform:scaleX(0.85);transform-origin:0 0;">SPI</div>
<div class="a" style="left:377px;top:262px;width:7px;height:6px;background:linear-gradient(90deg,#c03030 0,#c03030 40%,#f0a080 40%);border-radius:1px"></div>
<div class="t k" style="left:385px;top:262.10px;font-size:7px;line-height:8.00px;color:#05101a;font-weight:400;transform:scaleX(0.85);transform-origin:0 0;">In</div>
<div class="a" style="left:372.1px;top:263.6px;width:3.8px;height:3.8px;background:#fff;border:0.9px solid #505a64;border-radius:50%"></div>
<div class="a" style="left:269px;top:201px;width:49px;height:49px;background:#fdf2dc;border:1px solid #dca0a0;border-radius:2px"></div>
<div class="a" style="left:270px;top:202px;width:47px;height:10px;background:linear-gradient(#d8eef6,#a9cfe0);border-bottom:1px solid #c0a0a0"></div>
<div class="a" style="left:271px;top:205px;width:8px;height:5px;background:linear-gradient(#a0a8b0,#505860);border-radius:50% 50% 2px 2px"></div>
<div class="t k" style="left:281.5px;top:203.10px;font-size:7px;line-height:8.00px;color:#05101a;font-weight:400;transform:scaleX(0.86);transform-origin:0 0;">SDCard1</div>
<div class="a" style="left:307px;top:203px;width:9px;height:8px;background:linear-gradient(135deg,#c8e060,#90b030);border-radius:1px"></div>
<div class="a" style="left:309px;top:205px;width:6px;height:2px;background:#d07020;transform:rotate(-45deg)"></div>
<div class="t k" style="right:372.5px;top:213.10px;font-size:7px;line-height:8.00px;color:#05101a;font-weight:400;transform:scaleX(0.79);transform-origin:100% 0;">Out</div>
<div class="a" style="left:308px;top:213px;width:8px;height:8px;background:radial-gradient(circle at 50% 50%,#e05060 0,#c03040 60%,#f0a0a0 100%);border-radius:50%"></div>
<div class="a" style="left:310px;top:214px;width:4px;height:6px;background:#f0e0e0;opacity:.5"></div>
<div class="t k" style="right:372.5px;top:221.10px;font-size:7px;line-height:8.00px;color:#05101a;font-weight:400;transform:scaleX(0.79);transform-origin:100% 0;">ChipSelect</div>
<div class="a" style="left:308px;top:222px;width:7px;height:7px;background:linear-gradient(135deg,#f8b0a0,#e06050);border-radius:2px"></div>
<div class="a" style="left:312px;top:220px;width:5px;height:5px;background:#2a6ad0;border-radius:50% 50% 50% 0"></div>
<div class="t k" style="right:375px;top:229.10px;font-size:7px;line-height:8.00px;color:#05101a;font-weight:400;transform:scaleX(0.79);transform-origin:100% 0;">Failed</div>
<div class="t k" style="right:375px;top:237.10px;font-size:7px;line-height:8.00px;color:#05101a;font-weight:400;transform:scaleX(0.79);transform-origin:100% 0;">Success</div>
<svg class="a" style="left:306px;top:229px" width="7" height="8"><path d="M0.5 7 H2 V1 H5 V7 H6.5" fill="none" stroke="#333" stroke-width="0.8"/></svg>
<svg class="a" style="left:306px;top:237px" width="7" height="8"><path d="M0.5 7 H2 V1 H5 V7 H6.5" fill="none" stroke="#333" stroke-width="0.8"/></svg>
<div class="a" style="left:317.2px;top:215.7px;width:3.6px;height:3.6px;background:#fff;border:0.9px solid #e06878;border-radius:50%"></div>
<div class="a" style="left:317.2px;top:223.2px;width:3.6px;height:3.6px;background:#fff;border:0.9px solid #e06878;border-radius:50%"></div>
<div class="a" style="left:317.2px;top:231.2px;width:3.6px;height:3.6px;background:#fff;border:0.9px solid #e06878;border-radius:50%"></div>
<div class="a" style="left:317.2px;top:239.2px;width:3.6px;height:3.6px;background:#fff;border:0.9px solid #e06878;border-radius:50%"></div>
<svg class="a" style="left:0;top:0" width="680" height="489">
<path d="M320 225 H329.5 Q333.6 225 333.6 221 V108.5 Q333.6 104.5 337.6 104.5 H372" fill="none" stroke="#8a4258" stroke-width="1.5"/>
<path d="M320 217.5 H337 Q342 217.5 342 222.5 V260 Q342 265 347 265 H372" fill="none" stroke="#8a96a8" stroke-width="2.8"/>
<path d="M320 217.5 H337 Q342 217.5 342 222.5 V260 Q342 265 347 265 H372" fill="none" stroke="#c4ccd8" stroke-width="1"/>
</svg>
<div class="a" style="left:125px;top:305px;width:420px;height:179px;background:#f0f0f0;"></div>
<div class="t" style="left:128px;top:306.60px;font-size:7px;line-height:8.00px;color:#333;font-weight:400;transform:scaleX(0.79);transform-origin:0 0;">338:1003</div>
<div class="t" style="left:164px;top:306.60px;font-size:7px;line-height:8.00px;color:#333;font-weight:400;transform:scaleX(0.79);transform-origin:0 0;">Object</div>
<div class="a" style="left:128px;top:317px;width:414px;height:26px;background:#fcf0e6;"></div>
<div class="t" style="left:132px;top:320.60px;font-size:7px;line-height:8.00px;color:#333;font-weight:400;transform:scaleX(0.79);transform-origin:0 0;">Port:</div>
<div class="a" style="left:147px;top:319px;width:45px;height:11px;background:#e8e8e8;border:1px solid #c0c0c0"></div>
<div class="t" style="left:150px;top:320.60px;font-size:7px;line-height:8.00px;color:#222;font-weight:400;transform:scaleX(0.8);transform-origin:0 0;">COM5 (Unav</div>
<svg class="a" style="left:184.5px;top:322.5px" width="6" height="4"><path d="M0.8 0.8 L3 3 L5.2 0.8" fill="none" stroke="#444" stroke-width="1.1"/></svg>
<div class="t" style="left:195px;top:320.60px;font-size:7px;line-height:8.00px;color:#333;font-weight:400;transform:scaleX(0.79);transform-origin:0 0;">Speed:</div>
<div class="a" style="left:214px;top:319px;width:37px;height:11px;background:#fff;border:1px solid #c0c0c0"></div>
<div class="t" style="left:217px;top:320.60px;font-size:7px;line-height:8.00px;color:#222;font-weight:400;transform:scaleX(0.8);transform-origin:0 0;">9600</div>
<svg class="a" style="left:243.5px;top:322.5px" width="6" height="4"><path d="M0.8 0.8 L3 3 L5.2 0.8" fill="none" stroke="#444" stroke-width="1.1"/></svg>
<div class="t" style="left:254.5px;top:320.60px;font-size:7px;line-height:8.00px;color:#333;font-weight:400;transform:scaleX(0.79);transform-origin:0 0;">Format:</div>
<div class="a" style="left:276px;top:319px;width:91px;height:11px;background:#e8e8e8;border:1px solid #c0c0c0"></div>
<div class="t" style="left:279px;top:320.60px;font-size:7px;line-height:8.00px;color:#222;font-weight:400;transform:scaleX(0.8);transform-origin:0 0;">Unformatted Text</div>
<svg class="a" style="left:359px;top:322.5px" width="6" height="4"><path d="M0.8 0.8 L3 3 L5.2 0.8" fill="none" stroke="#444" stroke-width="1.1"/></svg>
<div class="a" style="left:369px;top:320px;width:7px;height:7px;background:#fff;border:1px solid #555"></div>
<div class="t" style="left:376.5px;top:320.60px;font-size:7px;line-height:8.00px;color:#333;font-weight:400;transform:scaleX(0.79);transform-origin:0 0;">Reset</div>
<div class="a" style="left:397px;top:319px;width:44px;height:11px;background:linear-gradient(#f6f6f6,#e6e6e6);border:1px solid #c8c8c8;border-radius:1px"></div>
<svg class="a" style="left:404px;top:321px" width="8" height="8"><path d="M0.5 3 L4 3 L7.5 0.5 L7.5 5 L4 7.5 L0.5 7.5 Z" fill="#e8c830" stroke="#4a3a10" stroke-width="0.8"/></svg>
<div class="t" style="left:413px;top:320.60px;font-size:7px;line-height:8.00px;color:#222;font-weight:400;transform:scaleX(0.79);transform-origin:0 0;">Connect</div>
<svg class="a" style="left:531px;top:319px" width="10" height="9"><path d="M1.5 7.5 L8 1" stroke="#3a6ad0" stroke-width="1.7"/><path d="M1.5 1.5 L8 8" stroke="#d04050" stroke-width="1.5"/></svg>
<div class="a" style="left:128px;top:333px;width:37px;height:10px;background:#fff;border:1px solid #dcdcdc;border-bottom:none"></div>
<div class="a" style="left:131px;top:334px;width:6px;height:5px;background:linear-gradient(#3a5a3a,#1a2a1a);border-radius:1px"></div>
<div class="a" style="left:132px;top:335px;width:2px;height:1px;background:#60d060;"></div>
<div class="t" style="left:142px;top:334.10px;font-size:7px;line-height:8.00px;color:#222;font-weight:400;transform:scaleX(0.79);transform-origin:0 0;">Terminal</div>
<div class="a" style="left:165px;top:334px;width:31px;height:8px;background:#f6f6f6;border:1px solid #d8d8d8;border-bottom:none"></div>
<div class="a" style="left:168px;top:335px;width:6px;height:5px;background:linear-gradient(#80a8e0,#3a6ad0);border-radius:1px"></div>
<div class="t" style="left:179px;top:334.60px;font-size:7px;line-height:8.00px;color:#222;font-weight:400;transform:scaleX(0.79);transform-origin:0 0;">Scope</div>
<div class="a" style="left:127px;top:342px;width:415px;height:142px;background:#fff;border:1px solid #dcdcdc"></div>
<div class="a" style="left:132px;top:350px;width:7px;height:7px;background:#fff;border:1px solid #555"></div>
<div class="t" style="left:-64.5px;width:400px;text-align:center;top:349.66px;font-size:6px;line-height:6.86px;color:#222;font-weight:700;transform:scaleX(1);transform-origin:50% 0;">&#x2713;</div>
<div class="t" style="left:140.5px;top:349.60px;font-size:7px;line-height:8.00px;color:#333;font-weight:400;transform:scaleX(0.79);transform-origin:0 0;">Auto Scroll</div>
<div class="a" style="left:172px;top:350px;width:7px;height:7px;background:#fff;border:1px solid #777"></div>
<div class="t" style="left:180px;top:349.60px;font-size:7px;line-height:8.00px;color:#333;font-weight:400;transform:scaleX(0.79);transform-origin:0 0;">Hold</div>
<div class="a" style="left:493px;top:345px;width:44px;height:12px;background:linear-gradient(#f6f6f6,#e4e4e4);border:1px solid #c8c8c8;border-radius:1px"></div>
<div class="a" style="left:510px;top:347px;width:6px;height:8px;background:linear-gradient(#f8e070,#d0a020);clip-path:polygon(0 0,40% 0,100% 60%,100% 100%,0 100%)"></div>
<div class="t" style="left:518.5px;top:347.10px;font-size:7px;line-height:8.00px;color:#222;font-weight:400;transform:scaleX(0.79);transform-origin:0 0;">Clear</div>
<div class="a" style="left:129px;top:360px;width:412px;height:105px;background:#fff;border-top:1px solid #e0e0e0;border-bottom:1px solid #e0e0e0"></div>
<div class="a" style="left:531px;top:361px;width:9px;height:103px;background:#fafafa;"></div>
<svg class="a" style="left:532px;top:364px" width="6" height="4"><path d="M0.8 3.2 L3 1 L5.2 3.2" fill="none" stroke="#bbb" stroke-width="1.1"/></svg>
<svg class="a" style="left:531px;top:456px" width="6" height="4"><path d="M0.8 0.8 L3 3 L5.2 0.8" fill="none" stroke="#bbb" stroke-width="1.1"/></svg>
<div class="a" style="left:129px;top:465px;width:412px;height:19px;background:#f8f8f8;"></div>
<div class="a" style="left:133px;top:469px;width:324px;height:11px;background:#fff;border:1px solid #dcdcdc"></div>
<div class="a" style="left:460px;top:469px;width:7px;height:7px;background:#fff;border:1px solid #555"></div>
<div class="t" style="left:263.5px;width:400px;text-align:center;top:468.66px;font-size:6px;line-height:6.86px;color:#222;font-weight:700;transform:scaleX(1);transform-origin:50% 0;">&#x2713;</div>
<div class="t" style="left:467.5px;top:469.60px;font-size:7px;line-height:8.00px;color:#333;font-weight:400;transform:scaleX(0.79);transform-origin:0 0;">Auto Clear</div>
<div class="a" style="left:501px;top:468px;width:36px;height:12px;background:linear-gradient(#f0f0f0,#e4e4e4);border:1px solid #d0d0d0;border-radius:1px"></div>
<div class="a" style="left:508px;top:471px;width:6px;height:6px;background:#9aa0a8;border-radius:1px"></div>
<div class="t" style="left:516px;top:470.10px;font-size:7px;line-height:8.00px;color:#222;font-weight:400;transform:scaleX(0.79);transform-origin:0 0;">Send</div>
<div class="a" style="left:541px;top:305px;width:2px;height:179px;background:#e0e0e0;"></div>
<div class="a" style="left:545px;top:39px;width:131px;height:433px;background:#f0f0f0;"></div>
<div class="a" style="left:545px;top:39px;width:131px;height:13px;background:#f8f8f8;"></div>
<div class="a" style="left:546px;top:40px;width:56px;height:10px;background:#fff;border:1px solid #c8c8c8"></div>
<div class="t" style="left:548px;top:41.10px;font-size:7px;line-height:8.00px;color:#222;font-weight:400;transform:scaleX(0.9);transform-origin:0 0;">sd</div>
<svg class="a" style="left:604px;top:40px" width="10" height="10"><path d="M2 2 L8 8 M8 2 L2 8" stroke="#c82838" stroke-width="1.8"/><path d="M6 1 L3 9" stroke="#7a90b0" stroke-width="0.8" opacity=".7"/></svg>
<div class="a" style="left:614px;top:40px;width:11px;height:10px;background:#b8d0ec;border:1px solid #98b4d8"></div>
<svg class="a" style="left:615px;top:41px" width="9" height="8"><path d="M4.5 0.5 L7.5 7.5 H1.5 Z" fill="#3a3aa8"/><circle cx="4.5" cy="2" r="1.3" fill="#5a5ad0"/></svg>
<div class="a" style="left:626px;top:44px;width:3px;height:2px;background:#333;"></div>
<div class="a" style="left:630px;top:42px;width:9px;height:7px;background:linear-gradient(#f8e080,#e8c040);border-radius:1px"></div>
<div class="a" style="left:632px;top:43px;width:5px;height:5px;background:none;border:1px solid #c8a030;border-radius:50%"></div>
<div class="a" style="left:642px;top:42px;width:8px;height:7px;background:linear-gradient(#f0d870,#d8b040);border-radius:1px"></div>
<div class="a" style="left:643px;top:43px;width:6px;height:5px;background:#3aa8e0;border-radius:50%"></div>
<div class="a" style="left:653px;top:42px;width:8px;height:7px;background:linear-gradient(#f0d870,#d8b040);border-radius:1px"></div>
<div class="a" style="left:654px;top:43px;width:6px;height:5px;background:#3aa8e0;border-radius:50%"></div>
<svg class="a" style="left:663px;top:40px" width="10" height="10"><path d="M2 8 L8 2" stroke="#3a6ad0" stroke-width="1.8"/><path d="M2 2 L8 8" stroke="#d04050" stroke-width="1.6"/></svg>
<div class="a" style="left:546px;top:53px;width:41px;height:42px;background:#fff;border:1.6px solid #4a9e4a;border-radius:3px"></div>
<div class="a" style="left:547.6px;top:54.6px;width:37.8px;height:9px;background:linear-gradient(#a8eca8,#78dc78);"></div>
<div class="a" style="left:550px;top:57px;width:6px;height:3px;background:#2a5a2a;border-radius:50% 0 50% 0;transform:rotate(-15deg)"></div>
<div class="t" style="left:558px;top:55.60px;font-size:7px;line-height:8.00px;color:#b8f0b8;font-weight:400;transform:scaleX(0.8);transform-origin:0 0;">SDCard</div>
<div class="a" style="left:551px;top:68px;width:20px;height:20px;background:linear-gradient(#8a8a8a,#505050);border:1px solid #3a3a3a;border-radius:3px"></div>
<div class="a" style="left:555px;top:71px;width:12px;height:8px;background:linear-gradient(#f0e0a0,#c8b060);clip-path:polygon(40% 0,100% 40%,60% 100%,0 60%)"></div>
<div class="a" style="left:554px;top:78px;width:12px;height:6px;background:linear-gradient(#b0b0b0,#606060);border-radius:2px"></div>
<div class="a" style="left:590px;top:54px;width:64px;height:62px;background:#fff;border:1px solid #c8c8c8;border-radius:3px"></div>
<div class="a" style="left:591px;top:55px;width:62px;height:8px;background:linear-gradient(#f4f4f4,#e0e0e0);"></div>
<div class="a" style="left:593px;top:56px;width:5px;height:6px;background:#c8c8c8;border-radius:50%"></div>
<div class="a" style="left:596px;top:69px;width:41px;height:41px;background:#fff;border:1px solid #c8c8c8;border-radius:3px"></div>
<div class="a" style="left:597px;top:70px;width:39px;height:9px;background:linear-gradient(#f4f4f4,#e0e0e0);"></div>
<div class="a" style="left:599px;top:72px;width:5px;height:6px;background:#c8c8c8;border-radius:50%"></div>
<div class="a" style="left:601px;top:84px;width:20px;height:20px;background:linear-gradient(#f0f0f0,#e0e0e0);border:1px solid #e0e0e0;border-radius:2px"></div>
<div class="a" style="left:606px;top:88px;width:4px;height:12px;background:#e8e8e8;border:1px solid #d8d8d8"></div>
<div class="a" style="left:546px;top:98px;width:41px;height:41px;background:#fff;border:1px solid #c8c8c8;border-radius:3px"></div>
<div class="a" style="left:547px;top:99px;width:39px;height:9px;background:linear-gradient(#f4f4f4,#e4e4e4);"></div>
<div class="a" style="left:549px;top:101px;width:5px;height:5px;background:#f0c8a0;border-radius:1px"></div>
<div class="a" style="left:551px;top:113px;width:20px;height:19px;background:linear-gradient(#f0f0f0,#e4e4e4);border:1px solid #e0e0e0;border-radius:2px"></div>
<div class="a" style="left:557px;top:120px;width:8px;height:6px;background:#f0d8d8;border-radius:50%"></div>
<div class="a" style="left:545px;top:472px;width:131px;height:12px;background:#fcf0e6;"></div>
<div class="t" style="right:39px;top:474.10px;font-size:7px;line-height:8.00px;color:#1a1a1a;font-weight:700;transform:scaleX(0.83);transform-origin:100% 0;">Arduino eBay Ads:</div>
<svg class="a" style="left:654px;top:474px" width="10" height="9"><path d="M1.5 7.5 L8 1" stroke="#3a6ad0" stroke-width="1.7"/><path d="M1.5 1.5 L8 8" stroke="#d04050" stroke-width="1.5"/></svg>
<div class="a" style="left:666.5px;top:474.5px;width:8px;height:8px;background:#d02838;border-radius:1px"></div>
<svg class="a" style="left:666.5px;top:474.5px" width="8" height="8"><path d="M2.6 2.8 A2.3 2.3 0 1 0 5.4 2.8" fill="none" stroke="#fff" stroke-width="1.1"/><path d="M4 1.3 V4" stroke="#fff" stroke-width="1.1"/></svg>
</body></html>
